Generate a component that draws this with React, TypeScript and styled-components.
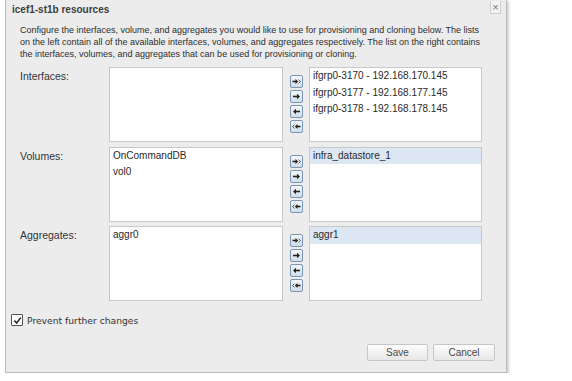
import React from 'react';
import styled, { createGlobalStyle } from 'styled-components';

const Global = createGlobalStyle`
  html, body { margin: 0; padding: 0; background: #fff; }
  body { font-family: "Liberation Sans", Arial, sans-serif; }
`;

const Dialog = styled.div`
  margin-left: 5px;
  width: 502px;
  height: 373px;
  box-sizing: border-box;
  background: #ececec;
  border: 1px solid #b9b9b9;
  border-top: none;
  box-shadow: 2px 1px 2px rgba(0, 0, 0, 0.18);
  display: flex;
  flex-direction: column;
  color: #333;
`;

const TitleBar = styled.div`
  height: 18px;
  display: flex;
  align-items: center;
  justify-content: space-between;
  padding: 0 5px 0 6px;
`;

const Title = styled.div`
  font-size: 10px;
  font-weight: bold;
  color: #3c3c3c;
`;

const CloseBox = styled.div`
  width: 11px;
  height: 13px;
  margin-top: -4px;
  box-sizing: border-box;
  border: 1px solid #cfcfcf;
  border-top: none;
  background: #f3f3f3;
  color: #777;
  font-size: 11px;
  line-height: 12px;
  text-align: center;
`;

const Description = styled.div`
  margin-top: 6px;
  padding-left: 14px;
  font-size: 9px;
  line-height: 12px;
  color: #2e2e2e;
  white-space: nowrap;
`;

const Grid = styled.div`
  margin-top: 7px;
  padding-left: 14px;
  display: grid;
  grid-template-columns: 89px 174px 26px 173px;
  grid-auto-rows: 75px;
  row-gap: 4.5px;
`;

const Label = styled.div`
  padding-top: 3px;
  font-size: 10.5px;
  line-height: 13px;
  color: #333;
`;

const ListBox = styled.div`
  background: #fff;
  border: 1px solid #c8c8c8;
  box-sizing: border-box;
  overflow: hidden;
`;

const ListItem = styled.div<{ $selected?: boolean }>`
  height: 16.5px;
  line-height: 16.5px;
  padding-left: 3px;
  font-size: 10px;
  color: #2a2a2a;
  white-space: nowrap;
  background: ${(p) => (p.$selected ? '#dde7f4' : 'transparent')};
`;

const ButtonColumn = styled.div`
  display: flex;
  flex-direction: column;
  align-items: center;
  padding-top: 8px;
  gap: 2px;
`;

const MoveButton = styled.div`
  width: 13px;
  height: 13px;
  box-sizing: border-box;
  border: 1px solid #7895b5;
  border-radius: 2px;
  background: linear-gradient(#f4f7fa, #d3dde8);
  display: flex;
  align-items: center;
  justify-content: center;
`;

const CheckRow = styled.div`
  margin-top: 13px;
  padding-left: 5px;
  display: flex;
  align-items: center;
  gap: 4px;
`;

const CheckBox = styled.div`
  width: 12px;
  height: 12px;
  box-sizing: border-box;
  border: 1px solid #555;
  border-radius: 1px;
  background: #fff;
  display: flex;
  align-items: center;
  justify-content: center;
`;

const CheckLabel = styled.div`
  font-family: "DejaVu Sans", sans-serif;
  font-size: 9.2px;
  color: #333;
`;

const Footer = styled.div`
  margin-top: auto;
  padding: 0 11px 11px 0;
  display: flex;
  justify-content: flex-end;
  gap: 5px;
`;

const FooterButton = styled.div<{ $w: number }>`
  width: ${(p) => p.$w}px;
  height: 17px;
  box-sizing: border-box;
  border: 1px solid #c6c6c6;
  border-radius: 2px;
  background: linear-gradient(#fdfdfd, #e6e6e6);
  font-size: 10px;
  line-height: 15px;
  text-align: center;
  color: #4a4a4a;
`;

type Dir = 'allRight' | 'right' | 'left' | 'allLeft';

const ArrowIcon: React.FC<{ dir: Dir }> = ({ dir }) => {
  const flip = dir === 'left' || dir === 'allLeft';
  const all = dir === 'allRight' || dir === 'allLeft';
  return (
    <svg width="9" height="9" viewBox="0 0 9 9" style={flip ? { transform: 'scaleX(-1)' } : undefined}>
      {all ? (
        <>
          <path d="M0.5 4.5H4" stroke="#222" strokeWidth="1.6" />
          <path d="M3.5 2 L6.2 4.5 L3.5 7 Z" fill="#222" />
          <path d="M6.6 2.6 L8.4 4.5 L6.6 6.4" stroke="#333" strokeWidth="0.8" fill="none" />
        </>
      ) : (
        <>
          <path d="M1 4.5H5.5" stroke="#222" strokeWidth="1.6" />
          <path d="M5 1.8 L8 4.5 L5 7.2 Z" fill="#222" />
        </>
      )}
    </svg>
  );
};

const Movers: React.FC = () => (
  <ButtonColumn>
    {(['allRight', 'right', 'left', 'allLeft'] as Dir[]).map((d) => (
      <MoveButton key={d}>
        <ArrowIcon dir={d} />
      </MoveButton>
    ))}
  </ButtonColumn>
);

type Row = { label: string; available: string[]; chosen: string[]; selected?: number };

const rows: Row[] = [
  {
    label: 'Interfaces:',
    available: [],
    chosen: ['ifgrp0-3170 - 192.168.170.145', 'ifgrp0-3177 - 192.168.177.145', 'ifgrp0-3178 - 192.168.178.145'],
  },
  { label: 'Volumes:', available: ['OnCommandDB', 'vol0'], chosen: ['infra_datastore_1'], selected: 0 },
  { label: 'Aggregates:', available: ['aggr0'], chosen: ['aggr1'], selected: 0 },
];

export default function App() {
  return (
    <>
      <Global />
      <Dialog>
        <TitleBar>
          <Title>icef1-st1b resources</Title>
          <CloseBox>×</CloseBox>
        </TitleBar>
        <Description>
          Configure the interfaces, volume, and aggregates you would like to use for provisioning and cloning below. The lists
          <br />
          on the left contain all of the available interfaces, volumes, and aggregates respectively. The list on the right contains
          <br />
          the interfaces, volumes, and aggregates that can be used for provisioning or cloning.
        </Description>
        <Grid>
          {rows.map((r) => (
            <React.Fragment key={r.label}>
              <Label>{r.label}</Label>
              <ListBox>
                {r.available.map((a) => (
                  <ListItem key={a}>{a}</ListItem>
                ))}
              </ListBox>
              <Movers />
              <ListBox>
                {r.chosen.map((c, i) => (
                  <ListItem key={c} $selected={r.selected === i}>
                    {c}
                  </ListItem>
                ))}
              </ListBox>
            </React.Fragment>
          ))}
        </Grid>
        <CheckRow>
          <CheckBox>
            <svg width="9" height="9" viewBox="0 0 9 9">
              <path d="M1.3 4.6 L3.6 7 L7.8 1.6" stroke="#222" strokeWidth="1.5" fill="none" />
            </svg>
          </CheckBox>
          <CheckLabel>Prevent further changes</CheckLabel>
        </CheckRow>
        <Footer>
          <FooterButton $w={61}>Save</FooterButton>
          <FooterButton $w={62}>Cancel</FooterButton>
        </Footer>
      </Dialog>
    </>
  );
}
